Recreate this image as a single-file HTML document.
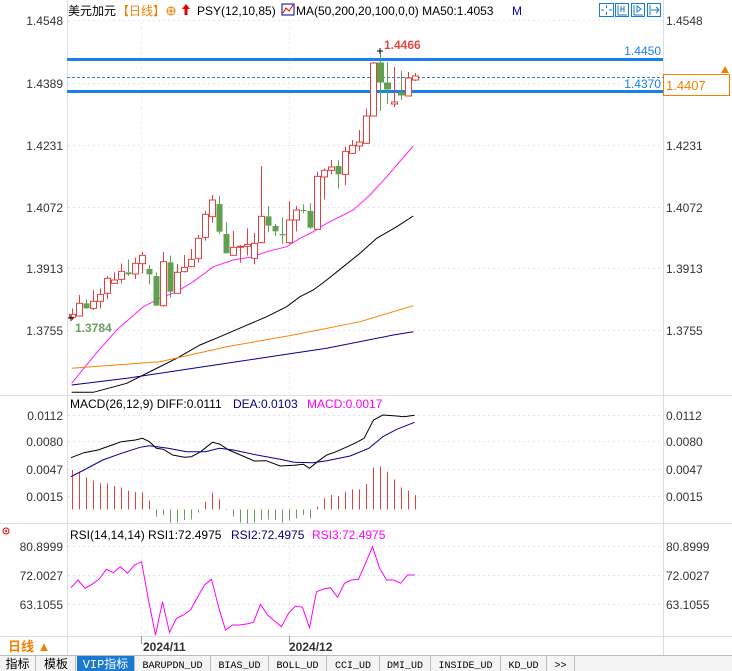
<!DOCTYPE html>
<html><head><meta charset="utf-8">
<style>
html,body{margin:0;padding:0;background:#fff;width:732px;height:671px;overflow:hidden;font-family:"Liberation Sans","Noto Sans CJK SC",sans-serif;}
svg{position:absolute;left:0;top:0}
</style></head>
<body>
<svg id="s" width="732" height="671" xmlns="http://www.w3.org/2000/svg" font-family="Liberation Sans, Noto Sans CJK SC, sans-serif">
<rect width="732" height="671" fill="#fff"/>
<g id="g"></g>
<!-- header -->
<text x="68" y="15" font-size="12" fill="#000">美元加元</text>
<text x="117" y="15" font-size="12" fill="#f08000">【日线】</text>
<circle cx="171" cy="11" r="4" fill="none" stroke="#f08000"/><line x1="167" y1="11" x2="175" y2="11" stroke="#f08000"/><line x1="171" y1="7" x2="171" y2="15" stroke="#f08000"/>
<path d="M186 4 L190 9 L187.5 9 L187.5 15 L184.5 15 L184.5 9 L182 9Z" fill="#e00000"/>
<text x="197" y="15" font-size="12" fill="#000">PSY(12,10,85)</text>
<rect x="282" y="4" width="12" height="11" fill="#fff" stroke="#000080"/><path d="M283 13 L286 8 L289 11 L293 5" stroke="#e00000" fill="none"/>
<text x="296" y="15" font-size="12" fill="#000">MA(50,200,20,100,0,0)  MA50:1.4053</text>
<text x="512" y="15" font-size="12" fill="#0000c0">M</text>
<g stroke="#1a7ad0" fill="none">
<rect x="599.5" y="3.5" width="14" height="13"/><rect x="615.5" y="3.5" width="13" height="13"/><rect x="631.5" y="3.5" width="13" height="13"/><rect x="647.5" y="3.5" width="13" height="13"/>
<path d="M606.5 5v3M606.5 12v3M601 10h3M609 10h3"/><path d="M618 5v10h9M621 6v6M624 6v6M621 9h3"/><path d="M634 5v10h9M637 6v6l4 -3z"/><path d="M650 5v10M651 10h7M656 7l3 3-3 3"/>
</g>
<!-- right current price -->
<rect x="663.5" y="74.5" width="66" height="21" fill="#fff" stroke="#f08000"/>
<text x="666" y="90" font-size="13" fill="#f08000">1.4407</text>
<path d="M721 73 L725 66 L729 73Z" fill="#f08000"/>
<!-- texts MACD/RSI -->
<text x="70" y="408" font-size="12" fill="#000">MACD(26,12,9) DIFF:0.0111</text>
<text x="233" y="408" font-size="12" fill="#000080">DEA:0.0103</text>
<text x="307" y="408" font-size="12" fill="#ff00ff">MACD:0.0017</text>
<text x="70" y="539" font-size="12" fill="#000">RSI(14,14,14) RSI1:72.4975</text>
<text x="231" y="539" font-size="12" fill="#000080">RSI2:72.4975</text>
<text x="312" y="539" font-size="12" fill="#ff00ff">RSI3:72.4975</text>
<circle cx="6" cy="531" r="3" fill="none" stroke="#e00000"/><circle cx="6" cy="531" r="1" fill="#e00000"/>
<text x="8" y="651" font-size="13" fill="#f08000" font-weight="bold">日线 ▲</text>
<text x="143" y="651" font-size="12" fill="#333" font-weight="bold">2024/11</text>
<text x="289" y="651" font-size="12" fill="#333" font-weight="bold">2024/12</text>
<text x="81" y="51" font-size="12" fill="#e04040" font-weight="bold" x2="0"></text>
<text x="384" y="49" font-size="12" fill="#e04848" font-weight="bold">1.4466</text>
<text x="75" y="332" font-size="12" fill="#6aa060" font-weight="bold">1.3784</text>
<text x="661" y="55" font-size="12" fill="#1a80f0" text-anchor="end">1.4450</text>
<text x="661" y="88" font-size="12" fill="#1a80f0" text-anchor="end">1.4370</text>
<path d="M377 51h6M380 48v6" stroke="#000"/>
<path d="M68 318h6M71 315v6" stroke="#000"/>
</svg>
<script>
var g=document.getElementById('g'),h='';
function L(x1,y1,x2,y2,c,w,d){h+='<line x1="'+x1+'" y1="'+y1+'" x2="'+x2+'" y2="'+y2+'" stroke="'+c+'" stroke-width="'+(w||1)+'"'+(d?' stroke-dasharray="'+d+'"':'')+'/>';}
function T(x,y,t,a){h+='<text x="'+x+'" y="'+y+'" font-size="12" fill="#333"'+(a?' text-anchor="end"':'')+'>'+t+'</text>';}
function P(pts,c,sx,sy,ox,oy){var s='';for(var i=0;i<pts.length;i++){s+=(i?'L':'M')+(ox+pts[i][0]/sx).toFixed(1)+' '+(oy+pts[i][1]/sy).toFixed(1);}h+='<path d="'+s+'" stroke="'+c+'" fill="none"/>';}
// frame
L(67.5,0,67.5,655,'#ddd');L(663.5,0,663.5,655,'#ddd');
L(0,395.5,732,395.5,'#ddd');L(0,523.5,732,523.5,'#ddd');L(0,636.5,732,636.5,'#ddd');
L(0,655.5,732,655.5,'#bbb');
// grids
var gy=[20,83,145,207,268,330],gl=['1.4548','1.4389','1.4231','1.4072','1.3913','1.3755'];
for(var i=0;i<gy.length;i++){L(68,gy[i]+.5,663,gy[i]+.5,'#e4e4e4',1,'2,3');T(63,gy[i]+5,gl[i],1);T(666,gy[i]+5,gl[i]);}
var my=[415,441,469,496],ml=['0.0112','0.0080','0.0047','0.0015'];
for(i=0;i<4;i++){L(68,my[i]+.5,663,my[i]+.5,'#e4e4e4',1,'2,3');T(63,my[i]+5,ml[i],1);T(666,my[i]+5,ml[i]);}
var ry=[546,575,604],rl=['80.8999','72.0027','63.1055'];
for(i=0;i<3;i++){L(68,ry[i]+.5,663,ry[i]+.5,'#e4e4e4',1,'2,3');T(63,ry[i]+5,rl[i],1);T(666,ry[i]+5,rl[i]);}
[141.5,289.5].forEach(function(x){L(x,22,x,636,'#e8e8e8',1,'2,3');L(x,636,x,644,'#999');});
// blue lines
L(67,59.5,663,59.5,'#1a80f0',3);L(67,91.5,663,91.5,'#1a80f0',3);L(67,77.5,663,77.5,'#3080e0',1,'3,2');
// MAs (zoom3 coords)
P([[35,850],[100,770],[170,690],[250,620],[300,595],[350,575],[400,545],[460,500],[520,480],[580,470],[620,455],[680,440],[720,415],[760,395],[800,370],[850,345],[880,330],[930,285],[980,230],[1060,138]],'#ff20ff',3,3,60,100);
P([[35,877],[100,877],[200,850],[280,810],[350,775],[420,735],[480,710],[550,680],[620,650],[680,620],[720,590],[760,570],[800,540],[850,500],[900,460],[950,415],[1010,380],[1060,348]],'#000',3,3,60,100);
P([[35,805],[300,785],[500,740],[700,705],[900,665],[1060,617]],'#ff8000',3,3,60,100);
P([[35,855],[200,835],[400,805],[600,775],[800,745],[1000,705],[1060,695]],'#000090',3,3,60,100);
// candles: bodyTop,bodyBot,wickTop,wickBot (zoom3 y), color r/g
var c=[[643,652,625,660,'r'],[610,648,585,650,'r'],[610,625,598,627,'g'],[604,625,570,630,'r'],[583,604,565,625,'r'],[535,580,528,597,'r'],[540,550,517,550,'r'],[514,538,490,550,'r'],[517,523,478,528,'g'],[490,522,473,537,'r'],[466,491,456,520,'r'],[507,523,495,553,'g'],[528,617,517,617,'g'],[485,617,456,620,'r'],[487,575,467,592,'g'],[517,580,492,580,'r'],[502,515,465,517,'r'],[478,500,447,502,'r'],[415,475,405,488,'r'],[343,412,333,422,'r'],[300,350,285,368,'r'],[312,395,288,402,'g'],[402,460,367,460,'g'],[442,466,393,466,'r'],[439,442,435,488,'r'],[433,439,385,466,'r'],[430,475,399,493,'r'],[349,428,198,430,'r'],[349,377,318,397,'g'],[378,394,372,408,'g'],[402,406,352,432,'g'],[360,428,303,432,'r'],[330,360,318,394,'r'],[330,331,313,340,'g'],[333,383,310,387,'g'],[229,388,215,390,'r'],[211,231,205,298,'r'],[201,211,180,223,'r'],[198,223,180,266,'g'],[154,223,140,255,'r'],[136,160,120,162,'r'],[126,138,90,152,'r'],[48,130,26,132,'r']];
for(i=0;i<c.length;i++){var x=72+7*i,a=c[i],col=a[4]=='r'?'#e04040':'#60a050';
var bt=100+a[0]/3,bb=100+a[1]/3,wt=100+a[2]/3,wb=100+a[3]/3;
L(x+.5,wt,x+.5,bt,col);L(x+.5,bb,x+.5,wb,col);
if(a[4]=='r')h+='<rect x="'+(x-2.5)+'" y="'+bt+'" width="6" height="'+Math.max(1,bb-bt)+'" fill="#fff" stroke="'+col+'"/>';
else h+='<rect x="'+(x-2.5)+'" y="'+bt+'" width="6" height="'+Math.max(1,bb-bt)+'" fill="'+col+'"/>';}
// last candles (real coords)
var c2=[[63,116,62,116,'r'],[63,82,53,111,'g'],[83,89,62,104,'g'],[102,104,67,107,'r'],[93,95,71,100,'g'],[78,96,72,96,'r'],[76,80,73,81,'r']];
for(i=0;i<c2.length;i++){var x=72+7*(43+i),a=c2[i],col=a[4]=='r'?'#e04040':'#60a050';
L(x+.5,a[2],x+.5,a[0],col);L(x+.5,a[1],x+.5,a[3],col);
h+='<rect x="'+(x-2.5)+'" y="'+a[0]+'" width="6" height="'+Math.max(1,a[1]-a[0])+'" fill="'+(a[4]=='r'?'#fff':col)+'" stroke="'+col+'"/>';}
// MACD histogram (zoom4 y tops)
var mh=[240,245,262,272,280,280,288,292,302,306,308,332,380,375,398,398,390,388,368,335,308,328,360,380,398,400,398,390,388,390,398,392,385,375,385,350,325,315,318,305,298,298,282,233,230,245,268,292,302,315];
for(i=0;i<mh.length;i++){var x=72+7*i+.5,z=390+358/3,yy=390+mh[i]/3;L(x,Math.min(z,yy),x,Math.max(z,yy),yy<z?'#e04040':'#60a050');}
var sx=732/1568*0+2.142;
P([[152,203],[180,188],[210,180],[240,165],[260,155],[290,150],[305,145],[320,155],[335,175],[350,178],[370,195],[395,202],[410,200],[430,185],[455,157],[470,162],[490,180],[520,198],[545,213],[570,212],[600,228],[630,226],[650,223],[663,235],[680,215],[700,195],[720,185],[760,160],[780,145],[800,90],[820,75],[850,78],[865,80],[888,76]],'#000',sx,3,0,390);
P([[152,260],[180,240],[220,210],[260,190],[300,172],[320,167],[360,175],[400,185],[440,185],[470,175],[500,180],[550,195],[600,208],[630,217],[670,218],[700,212],[750,198],[790,175],[820,140],[850,118],[888,97]],'#000090',sx,3,0,390);
P([[152,203],[167,180],[182,205],[197,193],[212,178],[228,148],[243,158],[258,140],[273,160],[288,135],[303,125],[318,240],[333,345],[348,245],[363,337],[378,295],[393,285],[408,270],[423,232],[438,195],[453,178],[468,260],[483,330],[498,315],[513,315],[528,312],[543,307],[558,253],[573,285],[588,303],[603,320],[618,280],[633,258],[648,262],[663,323],[678,215],[693,207],[708,203],[723,232],[738,190],[753,180],[768,178],[783,130],[798,80],[813,145],[828,180],[843,180],[858,190],[873,165],[888,165]],'#ff00ff',sx,3,0,520);
// tabs
var tabs=[['指标',0,35],['模板',37,75],['VIP指标',77,134],['BARUPDN_UD',135,210],['BIAS_UD',211,268],['BOLL_UD',269,326],['CCI_UD',327,379],['DMI_UD',380,430],['INSIDE_UD',431,500],['KD_UD',501,546],['>>',547,574]];
h+='<rect x="0" y="656" width="732" height="15" fill="#f4f4f4"/>';
tabs.forEach(function(t){var on=t[0]=='VIP指标';
if(on)h+='<rect x="'+t[1]+'" y="656" width="'+(t[2]-t[1])+'" height="15" fill="#1a7ad0"/>';
L(t[2]+.5,656,t[2]+.5,671,'#bbb');
h+='<text x="'+((t[1]+t[2])/2)+'" y="668" text-anchor="middle" font-size="'+(/[指模]/.test(t[0])?12:10)+'" font-family="Liberation Mono, Noto Sans CJK SC, monospace" fill="'+(on?'#fff':'#000')+'">'+t[0].replace('>','&gt;').replace('>','&gt;')+'</text>';});
g.innerHTML=h;
</script>
</body></html>
